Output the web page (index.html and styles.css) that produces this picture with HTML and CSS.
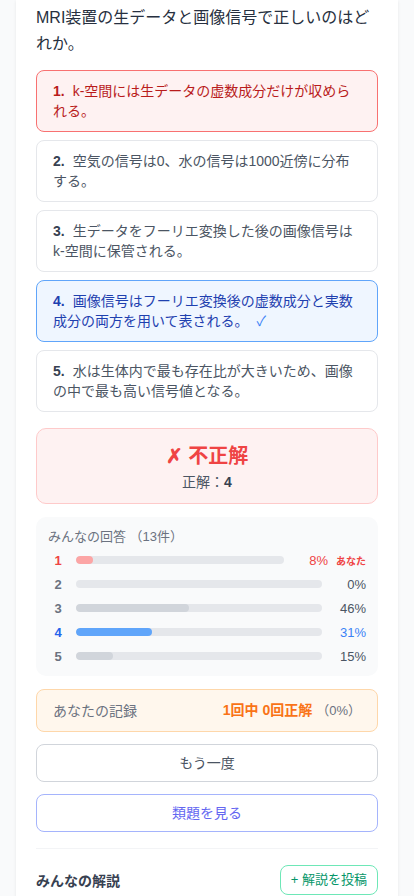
FILE: index.html
```html
<!DOCTYPE html>
<html lang="ja">
<head>
    <meta charset="UTF-8">
    <meta name="viewport" content="width=device-width, initial-scale=1.0">
    <title>MRI装置の生データと画像信号</title>
    <link rel="stylesheet" href="styles.css">
</head>
<body>

    <div class="page">
        <div class="card">
            <p class="question">MRI装置の生データと画像信号で正しいのはどれか。</p>

            <div class="choices">
                <div class="choice wrong"><span class="num">1.</span><span class="text">k-空間には生データの虚数成分だけが収められる。</span></div>
                <div class="choice"><span class="num">2.</span><span class="text">空気の信号は0、水の信号は1000近傍に分布する。</span></div>
                <div class="choice"><span class="num">3.</span><span class="text">生データをフーリエ変換した後の画像信号はk-空間に保管される。</span></div>
                <div class="choice right"><span class="num">4.</span><span class="text">画像信号はフーリエ変換後の虚数成分と実数成分の両方を用いて表される。<span class="check">✓</span></span></div>
                <div class="choice"><span class="num">5.</span><span class="text">水は生体内で最も存在比が大きいため、画像の中で最も高い信号値となる。</span></div>
            </div>

            <div class="result">
                <div class="result-title">✗ 不正解</div>
                <div class="result-answer">正解：<b>4</b></div>
            </div>

            <div class="stats">
                <div class="stats-head">みんなの回答 （13件）</div>
                <div class="stat mine">
                    <span class="stat-num">1</span>
                    <div class="bar"><div class="fill" style="width: 8%"></div></div>
                    <span class="stat-pct">8%</span>
                    <span class="you">あなた</span>
                </div>
                <div class="stat">
                    <span class="stat-num">2</span>
                    <div class="bar"><div class="fill" style="width: 0%"></div></div>
                    <span class="stat-pct">0%</span>
                </div>
                <div class="stat">
                    <span class="stat-num">3</span>
                    <div class="bar"><div class="fill" style="width: 46%"></div></div>
                    <span class="stat-pct">46%</span>
                </div>
                <div class="stat answer">
                    <span class="stat-num">4</span>
                    <div class="bar"><div class="fill" style="width: 31%"></div></div>
                    <span class="stat-pct">31%</span>
                </div>
                <div class="stat">
                    <span class="stat-num">5</span>
                    <div class="bar"><div class="fill" style="width: 15%"></div></div>
                    <span class="stat-pct">15%</span>
                </div>
            </div>

            <div class="record">
                <span class="record-label">あなたの記録</span>
                <span class="record-value"><b>1回中 0回正解</b><span class="record-rate">（0%）</span></span>
            </div>

            <button class="btn btn-retry">もう一度</button>
            <button class="btn btn-similar">類題を見る</button>

            <div class="comments">
                <div class="comments-head">
                    <span class="comments-title">みんなの解説</span>
                    <button class="btn-post">+ 解説を投稿</button>
                </div>
            </div>
        </div>
    </div>

</body>
</html>
```

FILE: styles.css
```css
* {
    margin: 0;
    padding: 0;
    box-sizing: border-box;
}

body {
    background-color: #f9fafb;
    font-family: "Liberation Sans", "Noto Sans CJK JP", sans-serif;
    color: #1f2937;
    overflow: hidden;
}

.page {
    padding: 0 16px;
}

.card {
    background: #fff;
    padding: 5px 20px 40px;
    box-shadow: 0 1px 3px rgba(0, 0, 0, 0.08);
    min-height: 100vh;
}

.question {
    font-size: 16px;
    line-height: 26px;
    color: #273040;
}

.choices {
    margin-top: 13px;
    display: flex;
    flex-direction: column;
    gap: 8px;
}

.choice {
    border: 1px solid #e5e7eb;
    border-radius: 8px;
    padding: 10px 16px;
    font-size: 14px;
    line-height: 20px;
    color: #4b5563;
    background: #fff;
}

.choice .num {
    font-weight: bold;
    color: #374151;
    margin-right: 8px;
}

.choice.wrong {
    border-color: #f87171;
    background: #fef2f2;
    color: #b91c1c;
}

.choice.wrong .num {
    color: #b91c1c;
}

.choice.right {
    border-color: #60a5fa;
    background: #eff6ff;
    color: #1e40af;
}

.choice.right .num {
    color: #1e40af;
}

.check {
    margin-left: 8px;
    color: #3b82f6;
}

.result {
    margin-top: 16px;
    background: #fef2f2;
    border: 1px solid #fecaca;
    border-radius: 10px;
    padding: 13px 16px 11px;
    text-align: center;
}

.result-title {
    font-size: 20px;
    line-height: 28px;
    font-weight: bold;
    color: #ef4444;
}

.result-answer {
    margin-top: 2px;
    font-size: 14px;
    line-height: 20px;
    color: #4b5563;
}

.result-answer b {
    color: #374151;
}

.stats {
    margin-top: 13px;
    background: #f9fafb;
    border-radius: 10px;
    padding: 12px 12px 10px;
}

.stats-head {
    font-size: 13px;
    line-height: 16px;
    color: #6b7280;
    margin-bottom: 5px;
}

.stat {
    display: flex;
    align-items: center;
    gap: 8px;
    height: 20px;
    margin-bottom: 4px;
    font-size: 13px;
}

.stat:last-child {
    margin-bottom: 0;
}

.stat-num {
    width: 20px;
    text-align: center;
    font-weight: bold;
    color: #6b7280;
}

.bar {
    flex: 1;
    height: 8px;
    border-radius: 4px;
    background: #e5e7eb;
    overflow: hidden;
}

.fill {
    height: 100%;
    border-radius: 4px;
    background: #d1d5db;
}

.stat-pct {
    width: 36px;
    text-align: right;
    color: #4b5563;
}

.stat.mine .stat-num,
.stat.mine .stat-pct {
    color: #ef4444;
}

.stat.mine .fill {
    background: #fca5a5;
}

.you {
    width: 30px;
    font-size: 10px;
    font-weight: bold;
    color: #ef4444;
    white-space: nowrap;
}

.stat.answer .stat-num {
    color: #2563eb;
}

.stat.answer .stat-pct {
    color: #3b82f6;
}

.stat.answer .fill {
    background: #60a5fa;
}

.record {
    margin-top: 13px;
    display: flex;
    justify-content: space-between;
    align-items: center;
    background: #fff7ed;
    border: 1px solid #fed7aa;
    border-radius: 8px;
    padding: 10px 16px;
    font-size: 14px;
    line-height: 20px;
}

.record-label {
    color: #6b7280;
}

.record-value b {
    color: #f97316;
}

.record-rate {
    margin-left: 4px;
    font-size: 13px;
    color: #6b7280;
}

.btn {
    display: block;
    width: 100%;
    margin-top: 12px;
    padding: 8px 16px;
    background: #fff;
    border: 1px solid #d1d5db;
    border-radius: 8px;
    font-family: inherit;
    font-size: 14px;
    line-height: 20px;
    color: #4b5563;
    cursor: pointer;
}

.btn-similar {
    border-color: #a5b4fc;
    color: #6366f1;
}

.comments {
    margin-top: 16px;
    border-top: 1px solid #f3f4f6;
    padding-top: 16px;
}

.comments-head {
    display: flex;
    justify-content: space-between;
    align-items: center;
}

.comments-title {
    font-size: 14px;
    font-weight: bold;
    color: #374151;
}

.btn-post {
    background: #fff;
    border: 1px solid #6ee7b7;
    border-radius: 8px;
    padding: 5px 10px;
    font-family: inherit;
    font-size: 13px;
    line-height: 18px;
    color: #059669;
    cursor: pointer;
}
```
